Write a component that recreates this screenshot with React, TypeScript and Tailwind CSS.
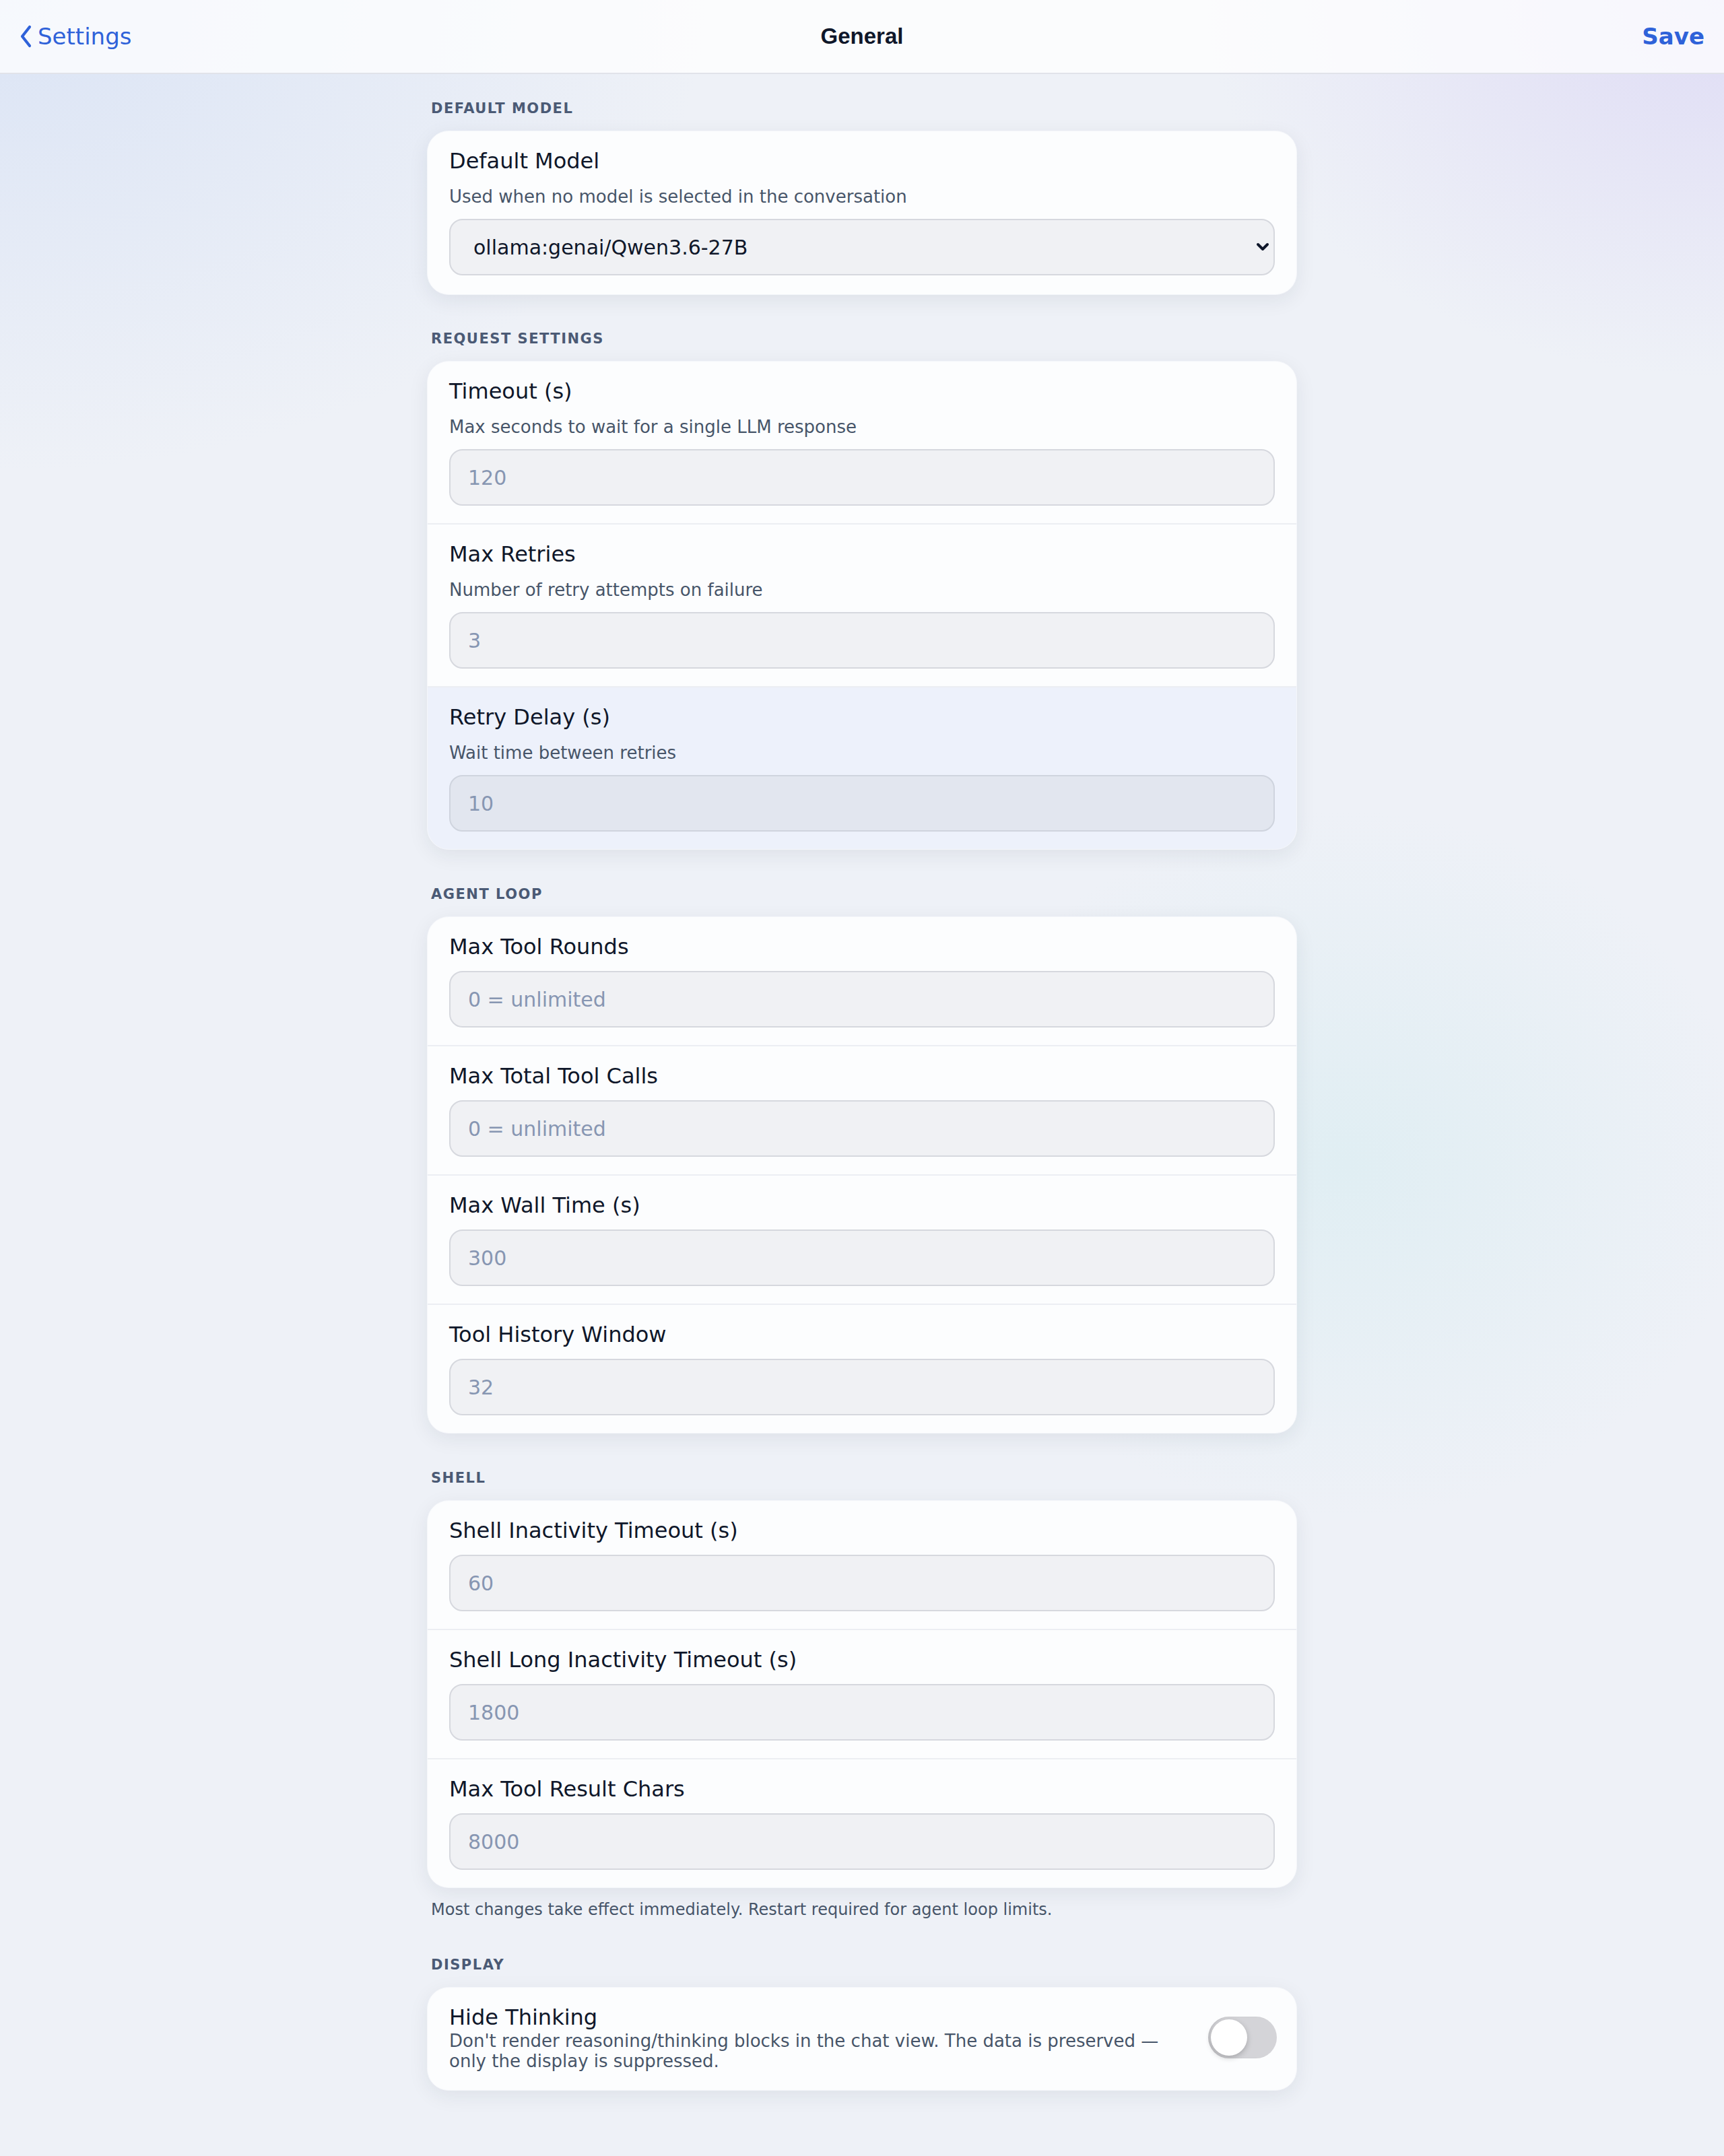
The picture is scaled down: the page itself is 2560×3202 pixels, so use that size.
import React from "react";

type Field = {
  label: string;
  hint?: string;
  placeholder: string;
  active?: boolean;
};

const requestFields: Field[] = [
  { label: "Timeout (s)", hint: "Max seconds to wait for a single LLM response", placeholder: "120" },
  { label: "Max Retries", hint: "Number of retry attempts on failure", placeholder: "3" },
  { label: "Retry Delay (s)", hint: "Wait time between retries", placeholder: "10", active: true },
];

const agentFields: Field[] = [
  { label: "Max Tool Rounds", placeholder: "0 = unlimited" },
  { label: "Max Total Tool Calls", placeholder: "0 = unlimited" },
  { label: "Max Wall Time (s)", placeholder: "300" },
  { label: "Tool History Window", placeholder: "32" },
];

const shellFields: Field[] = [
  { label: "Shell Inactivity Timeout (s)", placeholder: "60" },
  { label: "Shell Long Inactivity Timeout (s)", placeholder: "1800" },
  { label: "Max Tool Result Chars", placeholder: "8000" },
];

function SectionLabel({ children }: { children: React.ReactNode }) {
  return (
    <div className="px-[6px] mb-[19px] text-[21px] leading-[28px] font-bold tracking-[1.5px] uppercase text-[#4b5a75]">
      {children}
    </div>
  );
}

function Card({ children }: { children: React.ReactNode }) {
  return (
    <div className="overflow-hidden rounded-[32px] bg-[#fcfdfe] border border-[#f4f6fa] shadow-[0_8px_30px_rgba(30,41,59,0.075)]">
      {children}
    </div>
  );
}

function FieldRow({ field, first }: { field: Field; first: boolean }) {
  return (
    <div
      className={`px-[32px] pt-[24px] pb-[26px] ${first ? "" : "border-t-2 border-[#eceef3]"} ${
        field.active ? "bg-[#edf1fb]" : ""
      }`}
    >
      <div className="text-[32px] leading-[40px] text-[#0f172a]">{field.label}</div>
      {field.hint && (
        <div className="mt-[16px] text-[26px] leading-[34px] text-[#475569]">{field.hint}</div>
      )}
      <input
        type="text"
        placeholder={field.placeholder}
        className={`mt-[16px] block w-full h-[84px] rounded-[20px] border-2 px-[26px] text-[30px] text-[#0f172a] outline-none placeholder:text-[#8796b2] ${
          field.active ? "bg-[#e2e6ef] border-[#cfd4de]" : "bg-[#f0f1f4] border-[#d6d8de]"
        }`}
      />
    </div>
  );
}

function FieldCard({ fields }: { fields: Field[] }) {
  return (
    <Card>
      {fields.map((f, i) => (
        <FieldRow key={f.label} field={f} first={i === 0} />
      ))}
    </Card>
  );
}

function ChevronLeft() {
  return (
    <svg width="20" height="34" viewBox="0 0 20 34" fill="none">
      <polyline
        points="15,3 4,17 15,31"
        stroke="currentColor"
        strokeWidth="4.2"
        strokeLinecap="round"
        strokeLinejoin="round"
      />
    </svg>
  );
}

function ChevronDown() {
  return (
    <svg width="20" height="14" viewBox="0 0 20 14" fill="none">
      <polyline
        points="3,3 10,10 17,3"
        stroke="#0f172a"
        strokeWidth="4"
        strokeLinecap="round"
        strokeLinejoin="round"
      />
    </svg>
  );
}

export default function App() {
  return (
    <div className="min-h-screen w-full bg-[#eef1f7] bg-[radial-gradient(1500px_1000px_at_0%_0%,#dbe4f5,transparent_70%),radial-gradient(1100px_800px_at_100%_0%,#dfdcf5,transparent_70%),radial-gradient(800px_700px_at_78%_54%,#e0eef3,transparent_75%)] font-['DejaVu_Sans',sans-serif]">
      {/* top bar */}
      <header className="h-[110px] grid grid-cols-3 items-center bg-white/75 border-b-2 border-[#e1e3ea]">
        <button className="flex items-center gap-[7px] pl-[29px] text-[#2f62d9] text-[34px] leading-none justify-self-start">
          <ChevronLeft />
          <span>Settings</span>
        </button>
        <h1 className="justify-self-center text-[33px] font-bold text-[#0f172a] font-['Liberation_Sans',Arial,sans-serif]">
          General
        </h1>
        <button className="justify-self-end pr-[29px] text-[34px] font-bold text-[#2f62d9] leading-none">
          Save
        </button>
      </header>

      <main className="w-[1292px] mx-auto pt-[37px] pb-[97px] flex flex-col">
        <section>
          <SectionLabel>Default Model</SectionLabel>
          <Card>
            <div className="px-[32px] pt-[24px] pb-[28px]">
              <div className="text-[32px] leading-[40px] text-[#0f172a]">Default Model</div>
              <div className="mt-[16px] text-[26px] leading-[34px] text-[#475569]">
                Used when no model is selected in the conversation
              </div>
              <div className="relative mt-[16px]">
                <select
                  defaultValue="qwen"
                  className="block w-full h-[84px] appearance-none rounded-[20px] border-2 border-[#d6d8de] bg-[#f0f1f4] pl-[34px] pr-[60px] text-[30px] text-[#0f172a] outline-none"
                >
                  <option value="qwen">ollama:genai/Qwen3.6-27B</option>
                </select>
                <span className="pointer-events-none absolute right-[8px] top-1/2 -translate-y-1/2 flex">
                  <ChevronDown />
                </span>
              </div>
            </div>
          </Card>
        </section>

        <section className="mt-[51px]">
          <SectionLabel>Request Settings</SectionLabel>
          <FieldCard fields={requestFields} />
        </section>

        <section className="mt-[52px]">
          <SectionLabel>Agent Loop</SectionLabel>
          <FieldCard fields={agentFields} />
        </section>

        <section className="mt-[52px]">
          <SectionLabel>Shell</SectionLabel>
          <FieldCard fields={shellFields} />
          <p className="mt-[16px] px-[6px] text-[24px] leading-[32px] text-[#475569]">
            Most changes take effect immediately. Restart required for agent loop limits.
          </p>
        </section>

        <section className="mt-[52px]">
          <SectionLabel>Display</SectionLabel>
          <Card>
            <div className="flex items-center gap-[34px] pl-[32px] pr-[29px] pt-[24px] pb-[28px]">
              <div className="flex-1 min-w-0">
                <div className="text-[32px] leading-[40px] text-[#0f172a]">Hide Thinking</div>
                <div className="text-[26px] leading-[30px] text-[#475569]">
                  Don't render reasoning/thinking blocks in the chat view. The data is preserved — only the display is suppressed.
                </div>
              </div>
              <button
                aria-label="Hide Thinking"
                className="relative shrink-0 w-[102px] h-[62px] rounded-full bg-[#d4d4d8] shadow-[inset_2px_0_2px_rgba(0,0,0,0.08)]"
              >
                <span className="absolute left-[4px] top-[4px] w-[54px] h-[54px] rounded-full bg-white shadow-[0_3px_8px_rgba(0,0,0,0.22)]" />
              </button>
            </div>
          </Card>
        </section>
      </main>
    </div>
  );
}
